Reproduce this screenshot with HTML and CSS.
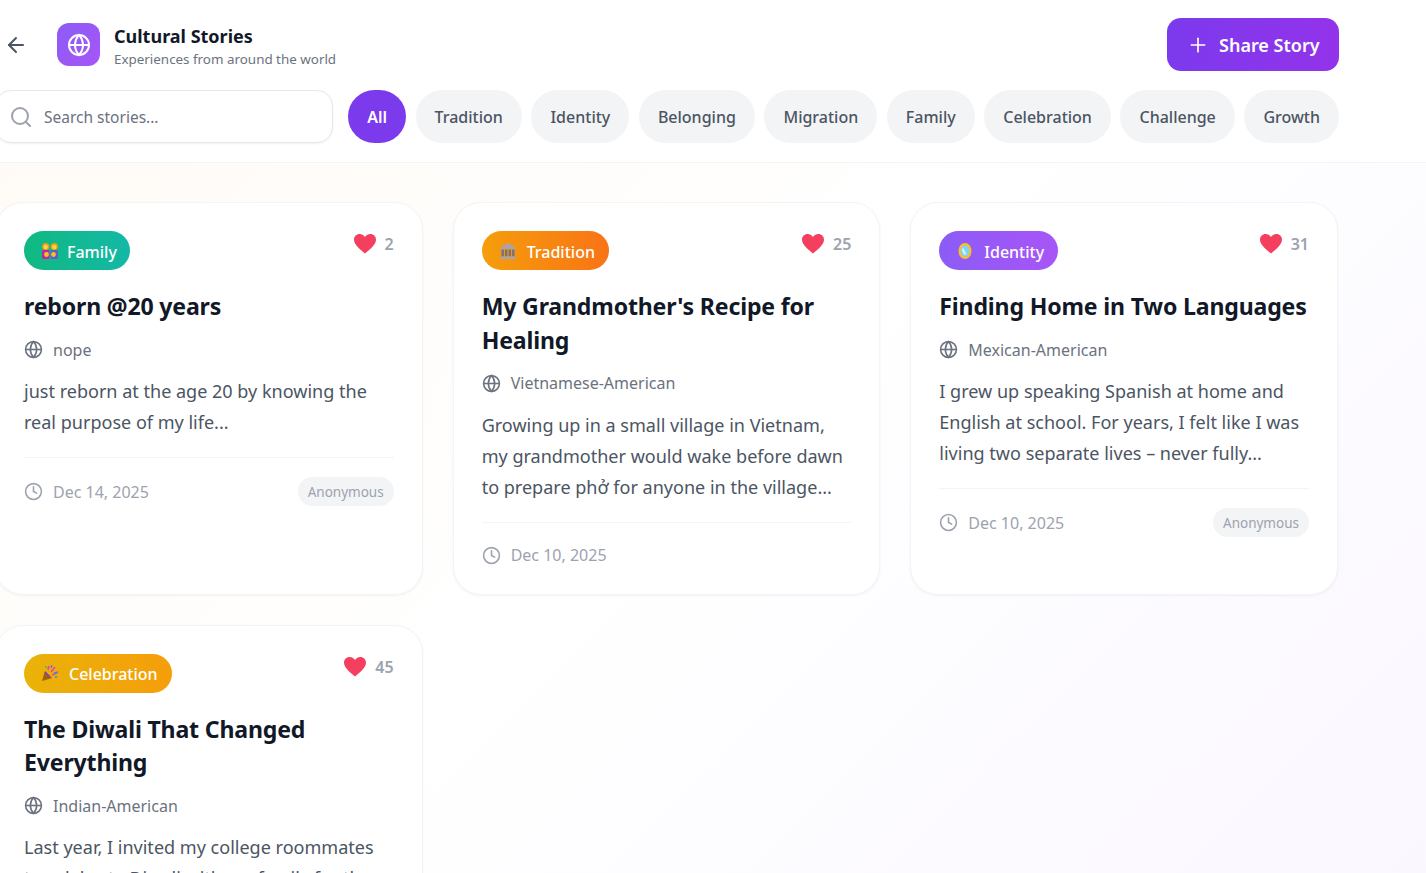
FILE: index.html
```html
<!DOCTYPE html>
<html lang="en">
<head>
    <meta charset="UTF-8">
    <title>Cultural Stories</title>
    <link rel="stylesheet" href="styles.css">
</head>
<body>
    <svg class="defs" width="0" height="0">
        <symbol id="globe" viewBox="0 0 24 24" fill="none" stroke="currentColor" stroke-width="2">
            <circle cx="12" cy="12" r="10"/>
            <path d="M2 12h20"/>
            <path d="M12 2a15.3 15.3 0 0 1 4 10 15.3 15.3 0 0 1-4 10 15.3 15.3 0 0 1-4-10 15.3 15.3 0 0 1 4-10z"/>
        </symbol>
        <symbol id="clock" viewBox="0 0 24 24" fill="none" stroke="currentColor" stroke-width="2" stroke-linecap="round" stroke-linejoin="round">
            <circle cx="12" cy="12" r="10"/>
            <path d="M12 6v6l4 2"/>
        </symbol>
        <symbol id="heart" viewBox="0 0 24 24">
            <path fill="#f43f5e" d="M12 21.5C5.5 16.2 1 12.4 1 7.6 1 4.3 3.6 2 6.6 2c2.1 0 4.1 1 5.4 3 1.3-2 3.3-3 5.4-3 3 0 5.6 2.3 5.6 5.6 0 4.8-4.5 8.6-11 13.9z"/>
        </symbol>
    </svg>

    <header class="header">
        <div class="wrap">
            <div class="top-row">
                <div class="brand">
                    <svg class="back" viewBox="0 0 24 24" fill="none" stroke="currentColor" stroke-width="2" stroke-linecap="round" stroke-linejoin="round">
                        <path d="M19 12H5"/><path d="M12 19l-7-7 7-7"/>
                    </svg>
                    <div class="logo"><svg><use href="#globe"/></svg></div>
                    <div>
                        <h1>Cultural Stories</h1>
                        <p>Experiences from around the world</p>
                    </div>
                </div>
                <button class="share">
                    <svg viewBox="0 0 24 24" fill="none" stroke="currentColor" stroke-width="2" stroke-linecap="round"><path d="M12 4v16"/><path d="M4 12h16"/></svg>
                    Share Story
                </button>
            </div>
            <div class="filter-row">
                <div class="search">
                    <svg viewBox="0 0 24 24" fill="none" stroke="currentColor" stroke-width="2" stroke-linecap="round"><circle cx="11" cy="11" r="8"/><path d="M21 21l-4.3-4.3"/></svg>
                    <span>Search stories...</span>
                </div>
                <div class="pills">
                    <span class="pill active">All</span>
                    <span class="pill">Tradition</span>
                    <span class="pill">Identity</span>
                    <span class="pill">Belonging</span>
                    <span class="pill">Migration</span>
                    <span class="pill">Family</span>
                    <span class="pill">Celebration</span>
                    <span class="pill">Challenge</span>
                    <span class="pill">Growth</span>
                </div>
            </div>
        </div>
    </header>

    <main class="wrap grid">
        <article class="card">
            <div class="card-top">
                <span class="tag family">
                    <svg class="emoji" viewBox="0 0 18 18">
                        <rect x="1" y="8" width="7.5" height="9" rx="1.5" fill="#c026a8"/>
                        <rect x="9.5" y="8" width="7.5" height="9" rx="1.5" fill="#5b5fc7"/>
                        <circle cx="4.7" cy="4.5" r="3.6" fill="#f59e0b"/>
                        <circle cx="13.3" cy="4.5" r="3.6" fill="#f59e0b"/>
                        <circle cx="4.7" cy="5" r="2.2" fill="#fcd34d"/>
                        <circle cx="13.3" cy="5" r="2.2" fill="#fcd34d"/>
                        <circle cx="5.5" cy="12.5" r="2.4" fill="#fbbf24"/>
                        <circle cx="12.5" cy="12.5" r="2.4" fill="#fbbf24"/>
                    </svg>
                    <span>Family</span>
                </span>
                <span class="likes"><svg><use href="#heart"/></svg>2</span>
            </div>
            <h2>reborn @20 years</h2>
            <div class="origin"><svg><use href="#globe"/></svg>nope</div>
            <p class="excerpt">just reborn at the age 20 by knowing the real purpose of my life...</p>
            <div class="card-foot">
                <span class="date"><svg><use href="#clock"/></svg>Dec 14, 2025</span>
                <span class="anon">Anonymous</span>
            </div>
        </article>

        <article class="card">
            <div class="card-top">
                <span class="tag tradition">
                    <svg class="emoji" viewBox="0 0 18 18">
                        <path d="M9 1L17 6v1H1V6z" fill="#a8a3ad"/>
                        <path d="M2.5 7.5h2.4v7H2.5zM6 7.5h2.4v7H6zM9.6 7.5H12v7H9.6zM13.1 7.5h2.4v7h-2.4z" fill="#77727f"/>
                        <rect x="1" y="14.5" width="16" height="2.5" rx=".5" fill="#a8a3ad"/>
                    </svg>
                    <span>Tradition</span>
                </span>
                <span class="likes"><svg><use href="#heart"/></svg>25</span>
            </div>
            <h2>My Grandmother's Recipe for Healing</h2>
            <div class="origin"><svg><use href="#globe"/></svg>Vietnamese-American</div>
            <p class="excerpt">Growing up in a small village in Vietnam, my grandmother would wake before dawn to prepare phở for anyone in the village...</p>
            <div class="card-foot">
                <span class="date"><svg><use href="#clock"/></svg>Dec 10, 2025</span>
            </div>
        </article>

        <article class="card">
            <div class="card-top">
                <span class="tag identity">
                    <svg class="emoji" viewBox="0 0 18 18">
                        <ellipse cx="9" cy="9" rx="6.5" ry="8" fill="#fbbf24"/>
                        <ellipse cx="9" cy="9" rx="4.3" ry="5.8" fill="#7dd3fc"/>
                        <path d="M7 5.5l3.5 7H8L6 8z" fill="#e0f2fe"/>
                    </svg>
                    <span>Identity</span>
                </span>
                <span class="likes"><svg><use href="#heart"/></svg>31</span>
            </div>
            <h2>Finding Home in Two Languages</h2>
            <div class="origin"><svg><use href="#globe"/></svg>Mexican-American</div>
            <p class="excerpt">I grew up speaking Spanish at home and English at school. For years, I felt like I was living two separate lives – never fully...</p>
            <div class="card-foot">
                <span class="date"><svg><use href="#clock"/></svg>Dec 10, 2025</span>
                <span class="anon">Anonymous</span>
            </div>
        </article>

        <article class="card">
            <div class="card-top">
                <span class="tag celebration">
                    <svg class="emoji" viewBox="0 0 18 18">
                        <path d="M1 17l3-10 7 7z" fill="#a16207"/>
                        <path d="M4 8l5 5" stroke="#7c3aed" stroke-width="1.5"/>
                        <path d="M7 6l1-4M10 8l4-5M11 11l5-2" stroke="#ec4899" stroke-width="1.8" fill="none"/>
                        <path d="M10 4l1-3M13 9l4-1" stroke="#3b82f6" stroke-width="1.3" fill="none"/>
                        <circle cx="5" cy="3" r="1" fill="#22c55e"/>
                        <circle cx="15" cy="13" r="1" fill="#3b82f6"/>
                    </svg>
                    <span>Celebration</span>
                </span>
                <span class="likes"><svg><use href="#heart"/></svg>45</span>
            </div>
            <h2>The Diwali That Changed Everything</h2>
            <div class="origin"><svg><use href="#globe"/></svg>Indian-American</div>
            <p class="excerpt">Last year, I invited my college roommates to celebrate Diwali with my family for the first time...</p>
            <div class="card-foot">
                <span class="date"><svg><use href="#clock"/></svg>Dec 8, 2025</span>
            </div>
        </article>
    </main>
</body>
</html>
```

FILE: styles.css
```css
* {
    box-sizing: border-box;
}

html, body {
    height: 100%;
    overflow: hidden;
}

body {
    margin: 0;
    font-family: "Noto Sans", "Open Sans", sans-serif;
    background: linear-gradient(135deg, #fffaf5 0%, #ffffff 50%, #faf7ff 100%);
    color: #111827;
}

.defs {
    display: block;
    height: 0;
}

.wrap {
    width: 1344px;
    margin-left: -5px;
}

.header {
    height: 163px;
    padding-top: 18px;
    background: #fff;
    border-bottom: 1px solid #f3f4f6;
}

.top-row {
    display: flex;
    justify-content: space-between;
    align-items: center;
    height: 53px;
}

.brand {
    display: flex;
    align-items: center;
    padding-left: 9px;
}

.back {
    width: 24px;
    height: 24px;
    color: #4b5563;
    margin-right: 29px;
}

.logo {
    width: 43px;
    height: 43px;
    border-radius: 12px;
    background: linear-gradient(135deg, #8b5cf6, #a855f7);
    color: #fff;
    display: flex;
    align-items: center;
    justify-content: center;
    margin-right: 14px;
}

.logo svg {
    width: 24px;
    height: 24px;
}

h1 {
    margin: 2px 0 0;
    font-size: 18px;
    line-height: 26px;
    font-weight: 700;
}

.brand p {
    margin: 1px 0 0;
    font-size: 13.4px;
    line-height: 18px;
    color: #6b7280;
}

.share {
    display: flex;
    align-items: center;
    gap: 11px;
    height: 53px;
    width: 172px;
    padding: 0 0 0 21px;
    border: none;
    border-radius: 14px;
    background: linear-gradient(90deg, #7c3aed, #9333ea);
    color: #fff;
    font: 600 18px "Noto Sans", sans-serif;
}

.share svg {
    width: 20px;
    height: 20px;
}

.filter-row {
    display: flex;
    justify-content: space-between;
    margin-top: 19px;
}

.search {
    width: 338px;
    height: 53px;
    display: flex;
    align-items: center;
    gap: 11px;
    padding-left: 13px;
    background: #fff;
    border: 1px solid #e5e7eb;
    border-radius: 16px;
    box-shadow: 0 1px 2px rgba(0, 0, 0, .05);
    font-size: 15.5px;
    color: #6b7280;
}

.search svg {
    width: 24px;
    height: 24px;
    color: #9ca3af;
}

.pills {
    display: flex;
    gap: 9.6px;
}

.pill {
    height: 53px;
    line-height: 55px;
    padding: 0 19px;
    border-radius: 27px;
    background: #f3f4f6;
    color: #4b5563;
    font-size: 16px;
    font-weight: 500;
}

.pill.active {
    background: #7c3aed;
    color: #fff;
    font-weight: 600;
}

.grid {
    display: grid;
    grid-template-columns: repeat(3, 427.67px);
    gap: 30px;
    padding-top: 39px;
}

.card {
    padding: 28px 28px 26px;
    background: #fff;
    border: 1px solid #f3f4f6;
    border-radius: 28px;
    box-shadow: 0 1px 3px rgba(0, 0, 0, .05);
}

.card-top {
    display: flex;
    justify-content: space-between;
    align-items: flex-start;
}

.tag {
    display: flex;
    align-items: center;
    gap: 10px;
    height: 39px;
    padding: 0 14px 0 17px;
    border-radius: 20px;
    color: #fff;
    font-size: 16px;
    font-weight: 500;
}

.tag span {
    padding-top: 2px;
}

.emoji {
    width: 18px;
    height: 18px;
}

.family {
    gap: 8px;
    padding-right: 13px;
    background: linear-gradient(90deg, #10b981, #14b8a6);
}

.tradition { background: linear-gradient(90deg, #f59e0b, #f97316); }
.identity { background: linear-gradient(90deg, #8b5cf6, #a855f7); }
.celebration { background: linear-gradient(90deg, #eab308, #f59e0b); }

.likes {
    display: flex;
    align-items: center;
    gap: 8px;
    margin-top: 1px;
    color: #9ca3af;
    font-size: 16px;
    font-weight: 600;
    height: 24px;
}

.likes svg {
    width: 24px;
    height: 24px;
}

h2 {
    margin: 20px 0 0;
    font-size: 23.1px;
    line-height: 33.6px;
    letter-spacing: -.17px;
    font-weight: 700;
    color: #111827;
}

.origin {
    display: flex;
    align-items: center;
    gap: 10px;
    margin-top: 15px;
    color: #6b7280;
    font-size: 16px;
    line-height: 22px;
}

.origin svg,
.date svg {
    width: 19px;
    height: 19px;
    flex: none;
}

.excerpt {
    margin: 15.4px 0 0;
    font-size: 18.05px;
    line-height: 31px;
    color: #4b5563;
}

.card-foot {
    display: flex;
    justify-content: space-between;
    align-items: center;
    margin-top: 19px;
    padding-top: 19px;
    border-top: 1px solid #f3f4f6;
}

.date {
    display: flex;
    align-items: center;
    gap: 10px;
    height: 26px;
    padding-top: 1px;
    color: #9ca3af;
    font-size: 16px;
}

.anon {
    height: 29px;
    line-height: 30px;
    padding: 0 10px;
    border-radius: 15px;
    background: #f3f4f6;
    color: #9ca3af;
    font-size: 13.5px;
}
```
